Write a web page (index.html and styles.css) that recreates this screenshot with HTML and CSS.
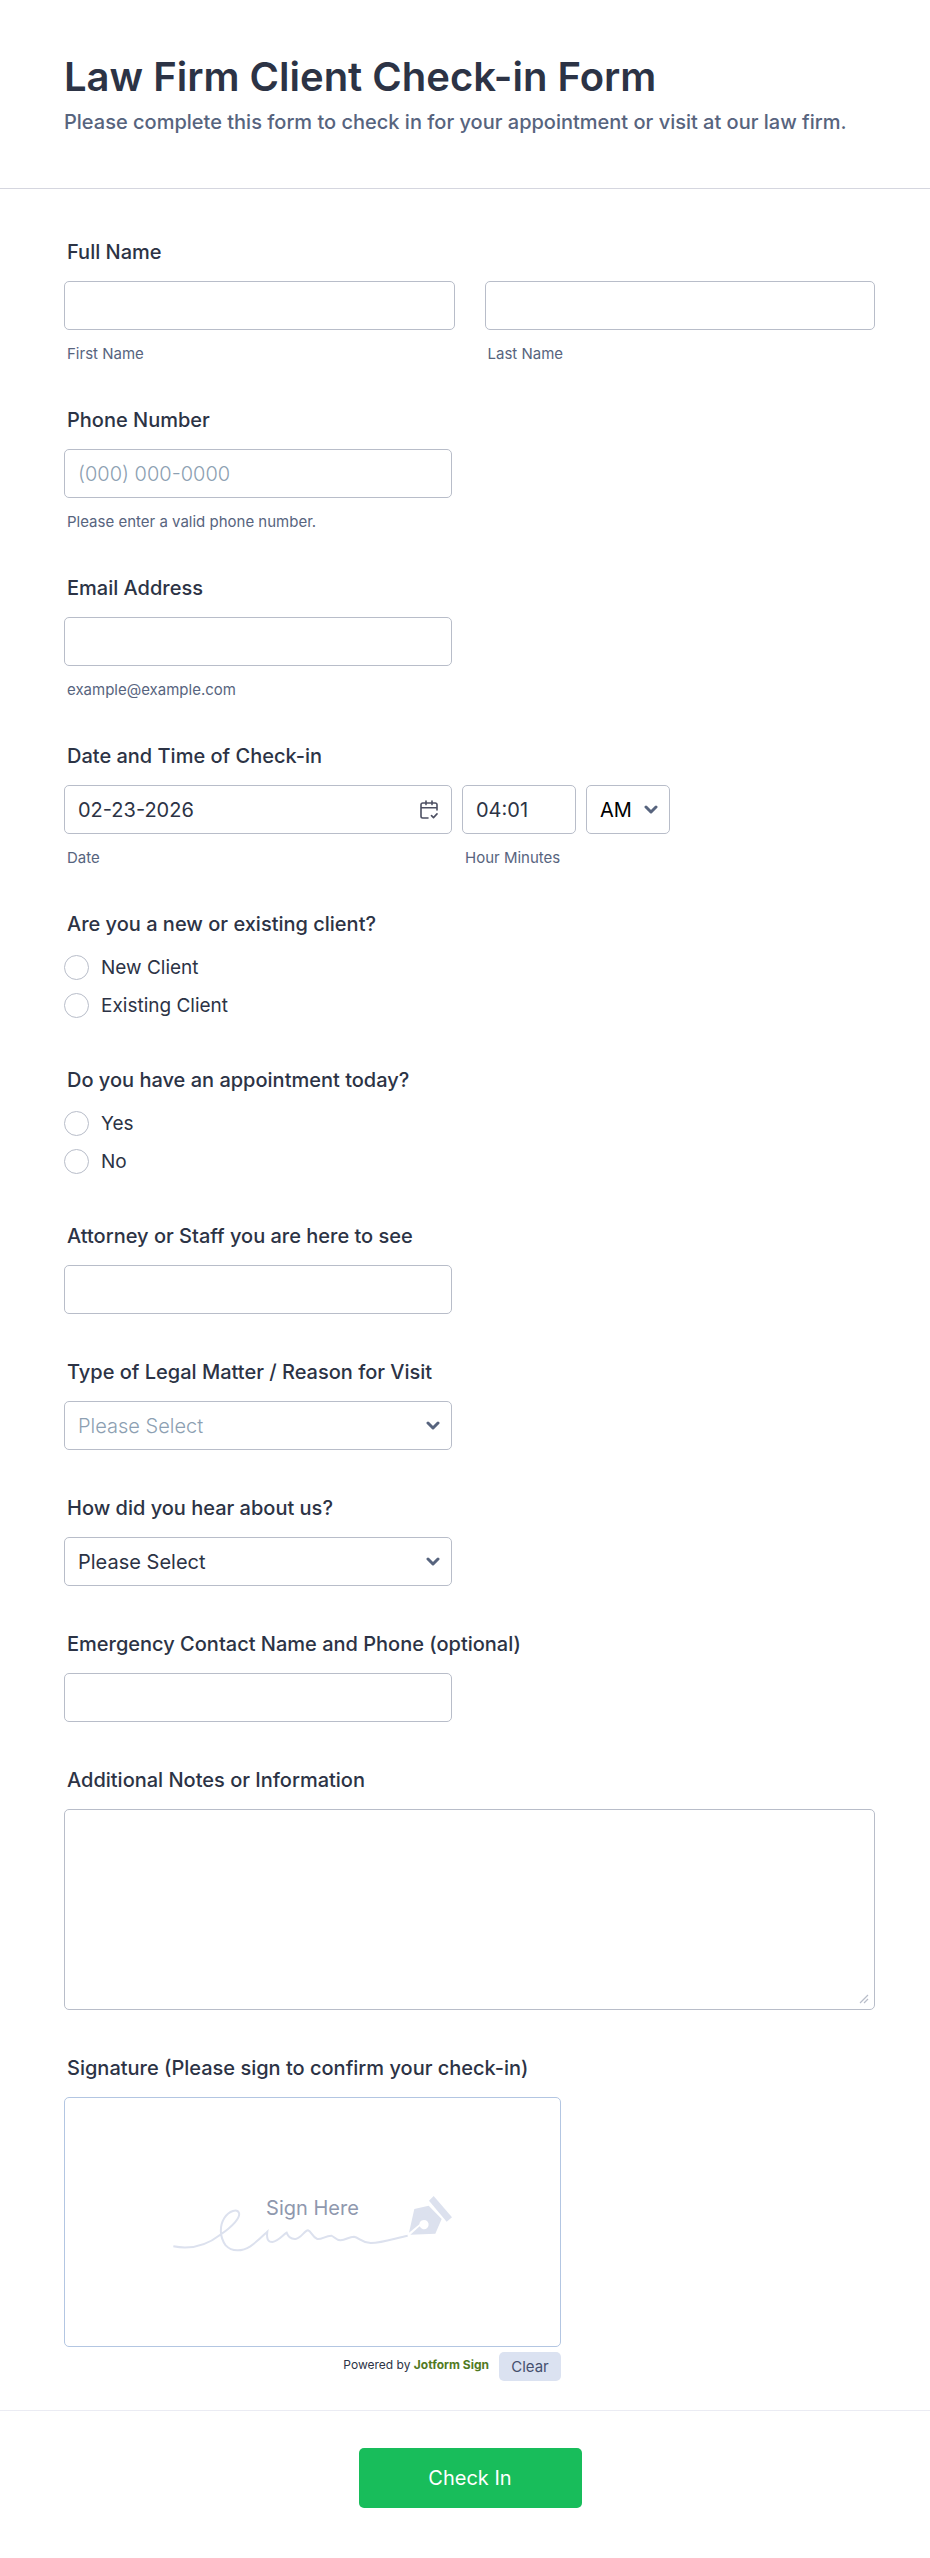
FILE: index.html
```
<!DOCTYPE html>
<html lang="en">
<head>
    <meta charset="UTF-8">
    <meta name="viewport" content="width=device-width, initial-scale=1.0">
    <title>Law Firm Client Check-in Form</title>
    <link rel="stylesheet" href="styles.css">
</head>
<body>
    <form class="form" onsubmit="return false">
        <header class="form-header">
            <h1>Law Firm Client Check-in Form</h1>
            <p>Please complete this form to check in for your appointment or visit at our law firm.</p>
        </header>

        <div class="form-body">
            <fieldset class="field">
                <legend class="label">Full Name</legend>
                <div class="name-row">
                    <div class="column">
                        <input class="control" type="text" id="first-name">
                        <label class="sub-label" for="first-name">First Name</label>
                    </div>
                    <div class="column">
                        <input class="control" type="text" id="last-name">
                        <label class="sub-label" for="last-name">Last Name</label>
                    </div>
                </div>
            </fieldset>

            <div class="field">
                <label class="label" for="phone">Phone Number</label>
                <input class="control half" type="tel" id="phone" placeholder="(000) 000-0000">
                <span class="sub-label">Please enter a valid phone number.</span>
            </div>

            <div class="field">
                <label class="label" for="email">Email Address</label>
                <input class="control half" type="email" id="email">
                <span class="sub-label">example@example.com</span>
            </div>

            <fieldset class="field">
                <legend class="label">Date and Time of Check-in</legend>
                <div class="date-row">
                    <div class="column date">
                        <div class="with-icon">
                            <input class="control" type="text" id="date" value="02-23-2026">
                            <button class="calendar-btn" type="button" aria-label="Choose date">
                                <svg width="18" height="19" viewBox="0 0 18 19" fill="none" stroke="#4c4f62" stroke-width="1.6" stroke-linecap="round" stroke-linejoin="round">
                                    <path d="M17 10V4.7A1.7 1.7 0 0 0 15.3 3H2.7A1.7 1.7 0 0 0 1 4.7v11.6A1.7 1.7 0 0 0 2.7 18H8M1 7.8h16M6 1v3.6M12 1v3.6M11.5 15.6l2 2 3.5-3.7"/>
                                </svg>
                            </button>
                        </div>
                        <label class="sub-label" for="date">Date</label>
                    </div>
                    <div class="column time">
                        <input class="control" type="text" id="time" value="04:01">
                        <label class="sub-label" for="time">Hour Minutes</label>
                    </div>
                    <div class="with-icon ampm">
                        <select class="control" aria-label="AM or PM">
                            <option>AM</option>
                            <option>PM</option>
                        </select>
                        <svg class="chevron" width="14" height="10" viewBox="0 0 14 10"><path d="M2 2l5 5 5-5"/></svg>
                    </div>
                </div>
            </fieldset>

            <fieldset class="field">
                <legend class="label">Are you a new or existing client?</legend>
                <div class="options">
                    <label class="option"><input type="radio" name="client">New Client</label>
                    <label class="option"><input type="radio" name="client">Existing Client</label>
                </div>
            </fieldset>

            <fieldset class="field">
                <legend class="label">Do you have an appointment today?</legend>
                <div class="options">
                    <label class="option"><input type="radio" name="appointment">Yes</label>
                    <label class="option"><input type="radio" name="appointment">No</label>
                </div>
            </fieldset>

            <div class="field">
                <label class="label" for="attorney">Attorney or Staff you are here to see</label>
                <input class="control half" type="text" id="attorney">
            </div>

            <div class="field">
                <label class="label" for="matter">Type of Legal Matter / Reason for Visit</label>
                <div class="with-icon half">
                    <select class="control empty" id="matter">
                        <option>Please Select</option>
                    </select>
                    <svg class="chevron" width="14" height="10" viewBox="0 0 14 10"><path d="M2 2l5 5 5-5"/></svg>
                </div>
            </div>

            <div class="field">
                <label class="label" for="source">How did you hear about us?</label>
                <div class="with-icon half">
                    <select class="control" id="source">
                        <option>Please Select</option>
                    </select>
                    <svg class="chevron" width="14" height="10" viewBox="0 0 14 10"><path d="M2 2l5 5 5-5"/></svg>
                </div>
            </div>

            <div class="field">
                <label class="label" for="emergency">Emergency Contact Name and Phone (optional)</label>
                <input class="control half" type="text" id="emergency">
            </div>

            <div class="field">
                <label class="label" for="notes">Additional Notes or Information</label>
                <textarea class="control notes" id="notes"></textarea>
            </div>

            <div class="field">
                <span class="label">Signature (Please sign to confirm your check-in)</span>
                <div class="signature">
                    <div class="pad">
                        <div class="pad-hint">
                            <svg width="282" height="60" viewBox="60 70 846 180">
                                <path d="M64 227C110 236 155 231 205 192C245 165 265 140 261 127C256 114 232 119 217 142C202 166 203 200 221 224C240 244 270 243 295 227C315 213 330 198 346 183C343 205 348 214 361 214C380 211 392 193 404 186C409 200 418 206 431 205C448 202 457 180 468 179C478 181 481 200 496 205C510 207 520 195 538 195C549 199 551 209 566 209C582 208 590 198 606 198C622 201 626 215 656 217C695 216 730 202 767 195" fill="none" stroke="#dce1ee" stroke-width="6"/>
                                <path d="M845 76L900 140L884 153L831 90Z" fill="#dce1ee"/>
                                <path d="M787 115L830 105L869 145L850 189L775 192L803 167A14 14 0 1 0 802 161L771 186Z" fill="#dce1ee"/>
                            </svg>
                            <span>Sign Here</span>
                        </div>
                    </div>
                    <div class="pad-footer">
                        <span class="powered">Powered by <b>Jotform Sign</b></span>
                        <button class="clear-btn" type="button">Clear</button>
                    </div>
                </div>
            </div>
        </div>

        <footer class="form-footer">
            <button class="submit-btn" type="submit">Check In</button>
        </footer>
    </form>
</body>
</html>
```

FILE: styles.css
```
* {
    box-sizing: border-box;
}

body {
    margin: 0;
    background-color: #fff;
    color: #2c3345;
    font-family: Inter, sans-serif;
    font-size: 20px;
}

input,
select,
textarea,
button {
    font-family: inherit;
    margin: 0;
}

.form-header {
    padding: 52px 64px 52px;
    border-bottom: 1px solid #d5d6df;
}

.form-header h1 {
    margin: 0;
    font-size: 40px;
    line-height: 50px;
    font-weight: 600;
}

.form-header p {
    margin: 6px 0 0;
    line-height: 28px;
    font-weight: 500;
    color: #57647e;
}

.form-body {
    padding: 51px 55px 29px 64px;
}

.field {
    display: flow-root;
    min-width: 0;
    margin: 0 0 46px;
    padding: 0;
    border: none;
}

.field:last-child {
    margin-bottom: 0;
}

.label {
    display: block;
    margin-bottom: 17px;
    padding: 0 3px;
    line-height: 24px;
    font-weight: 500;
}

.sub-label {
    display: block;
    margin-top: 15px;
    padding: 0 3px;
    font-size: 15px;
    line-height: 17px;
    color: #57647e;
}

.control {
    display: block;
    width: 100%;
    height: 49px;
    padding: 0 13px;
    border: 1px solid #b8bdc9;
    border-radius: 5px;
    background-color: #fff;
    color: #2c3345;
    font-size: 20px;
    appearance: none;
}

.control::placeholder {
    color: #8d9fb2;
    font-weight: 300;
    opacity: 1;
}

.half {
    max-width: 388px;
}

.name-row {
    display: flex;
    gap: 30px;
}

.column {
    flex: 1;
}

.date-row {
    display: flex;
    gap: 10px;
    align-items: flex-start;
}

.date {
    flex: 0 1 388px;
}

.time {
    flex: 0 0 114px;
}

.ampm {
    flex: 0 0 84px;
}

.ampm .control {
    color: #000;
}

.with-icon {
    position: relative;
}

.chevron {
    position: absolute;
    right: 12px;
    top: 20px;
    fill: none;
    stroke: #57647e;
    stroke-width: 3;
    stroke-linecap: round;
    stroke-linejoin: round;
    pointer-events: none;
}

.calendar-btn {
    position: absolute;
    top: 15px;
    right: 14px;
    padding: 0;
    border: none;
    background: none;
    line-height: 0;
    cursor: pointer;
}

.empty {
    color: #8d9fb2;
    font-weight: 300;
}

.options {
    display: flex;
    flex-direction: column;
    gap: 13px;
    padding: 2px 0 4px;
}

.option {
    display: flex;
    align-items: center;
    gap: 12px;
    font-size: 19px;
    line-height: 25px;
}

.option input {
    width: 25px;
    height: 25px;
    border: 1px solid #b8bdc9;
    border-radius: 50%;
    appearance: none;
}

.option input:checked {
    border: 7px solid #57647e;
}

.notes {
    height: 201px;
    padding: 12px 13px;
    resize: vertical;
}

/* lighter resize grip */
.notes::-webkit-resizer {
    background: url("data:image/svg+xml,%3Csvg xmlns='http://www.w3.org/2000/svg' width='15' height='15'%3E%3Cpath d='M1 9l8-8M5 9l4-4' stroke='%23b8bdc9' stroke-width='1.2'/%3E%3C/svg%3E") no-repeat;
}

.signature {
    max-width: 497px;
}

.pad {
    display: flex;
    justify-content: center;
    align-items: center;
    height: 250px;
    padding-top: 3px;
    border: 1px solid #b3c6e2;
    border-radius: 5px;
}

.pad-hint {
    position: relative;
    line-height: 0;
}

.pad-hint span {
    position: absolute;
    top: 2px;
    left: 0;
    width: 100%;
    line-height: 24px;
    text-align: center;
    color: #8f98ae;
}

.pad-footer {
    display: flex;
    justify-content: flex-end;
    gap: 10px;
    margin-top: 5px;
}

.powered {
    font-size: 12px;
    line-height: 26px;
}

.powered b {
    color: #527a1f;
}

.clear-btn {
    width: 62px;
    height: 29px;
    padding: 0;
    border: none;
    border-radius: 5px;
    background-color: #dbe2f1;
    color: #46506e;
    font-size: 15px;
    cursor: pointer;
}

.form-footer {
    display: flex;
    justify-content: center;
    padding: 37px 54px 50px 64px;
    border-top: 1px solid #ebecf3;
}

.submit-btn {
    min-width: 223px;
    height: 60px;
    border: none;
    border-radius: 5px;
    background-color: #18bd5b;
    color: #fff;
    font-size: 20px;
    cursor: pointer;
}
```
